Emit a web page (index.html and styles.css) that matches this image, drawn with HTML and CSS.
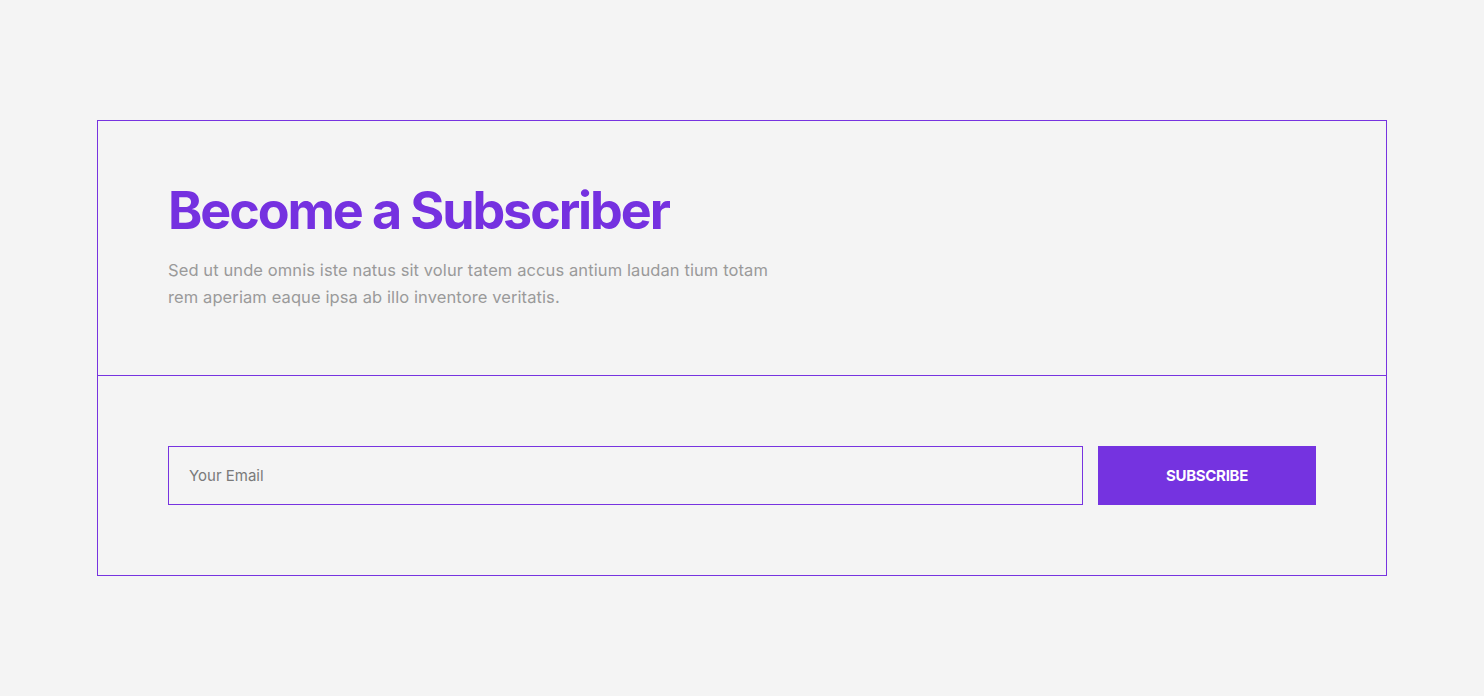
FILE: index.html
```html
<!DOCTYPE html>
<html lang="en">
<head>
<meta charset="utf-8">
<title>Become a Subscriber</title>
<link rel="stylesheet" href="styles.css">
</head>
<body>
<section class="subscribe">
  <div class="subscribe-head">
    <h2 class="title">Become a Subscriber</h2>
    <p class="lead">Sed ut unde omnis iste natus sit volur tatem accus antium laudan tium totam rem aperiam eaque ipsa ab illo inventore veritatis.</p>
  </div>
  <form class="subscribe-form">
    <input class="email" type="email" placeholder="Your Email">
    <button class="btn" type="button">SUBSCRIBE</button>
  </form>
</section>
</body>
</html>
```
FILE: styles.css
```css
* { box-sizing: border-box; }
html, body { margin: 0; padding: 0; }
body {
  background: #f4f4f4;
  font-family: "Inter", "Noto Sans", sans-serif;
  padding-top: 120px;
}
.subscribe {
  width: 1290px;
  margin: 0 auto;
  border: 1px solid #7733e0;
}
.subscribe-head {
  padding: 58px 70px 0;
  height: 255px;
  border-bottom: 1px solid #7733e0;
}
.title {
  margin: 0;
  font-size: 52px;
  line-height: 64px;
  font-weight: 700;
  letter-spacing: -2.1px;
  color: #7531e0;
}
.lead {
  margin: 14px 0 0;
  width: 625px;
  font-size: 16.5px;
  line-height: 27px;
  color: #9a9a9a;
  letter-spacing: 0.1px;
}
.subscribe-form {
  display: flex;
  gap: 15px;
  padding: 70px;
}
.email {
  flex: 1;
  height: 59px;
  border: 1px solid #7733e0;
  background: transparent;
  padding: 0 20px;
  font-family: inherit;
  font-size: 15px;
  color: #555;
  outline: none;
}
.email::placeholder { color: #7a7a7a; }
.btn {
  width: 218px;
  height: 59px;
  border: none;
  background: #7533e0;
  color: #fff;
  font-family: inherit;
  font-size: 15px;
  font-weight: 700;
  letter-spacing: -0.3px;
  cursor: pointer;
}
```
